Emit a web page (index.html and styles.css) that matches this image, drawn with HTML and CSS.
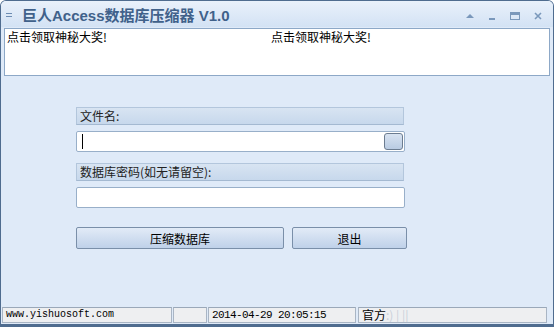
FILE: index.html
```html
<!DOCTYPE html>
<html lang="zh-CN">
<head>
    <meta charset="UTF-8">
    <title>巨人Access数据库压缩器 V1.0</title>
    <link rel="stylesheet" href="styles.css">
</head>
<body>

    <div class="window">
        <div class="titlebar">
            <span class="sysmenu"></span>
            <span class="title">巨人Access数据库压缩器 V1.0</span>
            <div class="caption-btns">
                <svg width="8" height="5" viewBox="0 0 8 5"><polygon points="0,5 4,1 8,5" fill="#7a98bb"/></svg>
                <svg width="8" height="8" viewBox="0 0 8 8"><rect x="1" y="6" width="6" height="2" fill="#7a98bb"/></svg>
                <svg width="10" height="8" viewBox="0 0 10 8"><rect x="0.5" y="0.5" width="9" height="7" fill="none" stroke="#7a98bb"/><rect x="0" y="0" width="10" height="3" fill="#7a98bb"/></svg>
                <svg width="8" height="8" viewBox="0 0 8 8"><path d="M1 1 L7 7 M7 1 L1 7" stroke="#7a98bb" stroke-width="1.6"/></svg>
            </div>
        </div>

        <div class="client">
            <div class="memo">
                <span class="ad">点击领取神秘大奖!</span>
                <span class="ad">点击领取神秘大奖!</span>
            </div>

            <div class="form">
                <div class="label-bar">文件名:</div>
                <div class="field">
                    <span class="caret"></span>
                    <span class="browse"></span>
                </div>

                <div class="label-bar">数据库密码(如无请留空):</div>
                <div class="field field-last"></div>

                <div class="actions">
                    <button class="btn btn-main">压缩数据库</button>
                    <button class="btn btn-exit">退出</button>
                </div>
            </div>

            <div class="statusbar">
                <div class="panel p-site">www.yishuosoft.com</div>
                <div class="panel p-empty"></div>
                <div class="panel p-time">2014-04-29 20:05:15</div>
                <div class="panel p-info">官方<span class="fade">:)  | ||</span></div>
            </div>
        </div>
    </div>

</body>
</html>
```

FILE: styles.css
```css
body {
    margin: 0;
    background-color: #ffffff;
    font-family: "Noto Sans CJK SC", "Liberation Sans", sans-serif;
    font-size: 12px;
    color: #000;
}
.window {
    width: 554px;
    height: 327px;
    box-sizing: border-box;
    border: 1px solid #4f6c8f;
    border-bottom-width: 3px;
    border-radius: 6px 6px 0 0;
    background-color: #dfeaf8;
    display: flex;
    flex-direction: column;
    overflow: hidden;
}
.titlebar {
    height: 26px;
    flex: none;
    display: flex;
    align-items: center;
    background: linear-gradient(#e9f1fb, #d3e2f4);
}
.sysmenu {
    width: 6px;
    height: 2px;
    margin: 2px 10px 0 5px;
    border-top: 1px solid #6d8db3;
    border-bottom: 1px solid #6d8db3;
}
.title {
    font-family: "Liberation Sans", "Noto Sans CJK SC", sans-serif;
    font-size: 15px;
    font-weight: bold;
    color: #40618a;
}
.caption-btns {
    margin-left: auto;
    margin-right: 11px;
    display: flex;
    align-items: center;
    gap: 14px;
    margin-top: 3px;
}
.client {
    flex: 1;
    display: flex;
    flex-direction: column;
}
.memo {
    height: 48px;
    margin: 1px 3px 0 3px;
    box-sizing: border-box;
    background-color: #fff;
    border: 1px solid #8da8c7;
    padding: 0 2px;
    display: flex;
    line-height: 16px;
}
.ad {
    width: 264px;
}
.form {
    width: 331px;
    margin: 31px 0 0 75px;
    display: flex;
    flex-direction: column;
}
.label-bar {
    height: 18px;
    width: 328px;
    box-sizing: border-box;
    border: 1px solid #b3c6dc;
    border-bottom-color: #a4b9d1;
    background: linear-gradient(#d8e4f2, #c7d8ec);
    padding-left: 3px;
    line-height: 16px;
    color: #222;
}
.field {
    height: 21px;
    width: 329px;
    margin: 6px 0 11px 0;
    box-sizing: border-box;
    background-color: #fff;
    border: 1px solid #98afc9;
    border-radius: 2px;
    display: flex;
    align-items: center;
    padding: 0 1px 0 5px;
}
.field-last {
    margin-bottom: 19px;
}
.caret {
    width: 1px;
    height: 15px;
    background-color: #000;
}
.browse {
    margin-left: auto;
    width: 19px;
    height: 17px;
    box-sizing: border-box;
    border: 1px solid #6c7c90;
    border-radius: 3px;
    background: linear-gradient(#d8e3f1, #b9cbe2);
}
.actions {
    display: flex;
    gap: 8px;
}
.btn {
    height: 22px;
    flex: none;
    box-sizing: border-box;
    border: 1px solid #7a8fa9;
    border-radius: 2px;
    background: linear-gradient(#e2ebf7, #bfd1e9);
    font-family: "Noto Sans CJK SC", sans-serif;
    font-size: 12px;
    color: #000;
    padding: 0;
}
.btn-main {
    width: 208px;
}
.btn-exit {
    width: 115px;
}
.statusbar {
    margin-top: auto;
    margin-bottom: 1px;
    height: 16px;
    display: flex;
    gap: 1px;
    padding-left: 1px;
}
.panel {
    height: 16px;
    box-sizing: border-box;
    border: 1px solid #a9b5c4;
    border-top-color: #9aa8b9;
    background-color: #eeeff1;
    padding-left: 3px;
    line-height: 14px;
    white-space: nowrap;
    overflow: hidden;
}
.p-site {
    width: 170px;
    font-family: "Liberation Mono", monospace;
    font-size: 10px;
}
.p-empty {
    width: 34px;
}
.p-time {
    width: 148px;
    margin-right: 1px;
    font-family: "Liberation Mono", monospace;
    font-size: 11px;
    letter-spacing: -0.6px;
}
.p-info {
    width: 189px;
}
.fade {
    color: #c9d0d9;
}
```
